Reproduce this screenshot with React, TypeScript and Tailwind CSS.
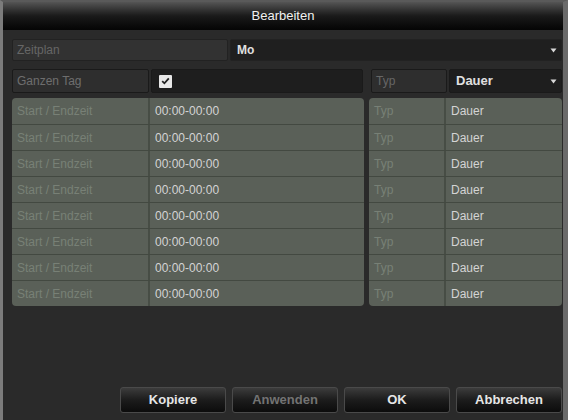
import React from "react"

const font = { fontFamily: '"Liberation Sans", Arial, sans-serif' }

const rows = Array.from({ length: 8 }, () => ({ time: "00:00-00:00", typ: "Dauer" }))

function Arrow() {
  return (
    <svg width="7" height="5" viewBox="0 0 7 5" className="shrink-0">
      <path d="M0.5 0.5 L6.5 0.5 L3.5 4.5 Z" fill="#d8d8d8" />
    </svg>
  )
}

function Button({ label, disabled }: { label: string; disabled?: boolean }) {
  return (
    <div
      className={`flex h-[26px] w-[106px] items-center justify-center rounded-[3px] border border-[#4a4a4a] bg-gradient-to-b from-[#3c3c3c] via-[#1c1c1c] to-[#0c0c0c] text-[13px] font-bold ${
        disabled ? "text-[#737373]" : "text-[#e6e6e6]"
      }`}
    >
      {label}
    </div>
  )
}

export default function App() {
  return (
    <div
      className="flex h-[420px] w-[568px] flex-col border-l-[3px] border-r-[5px] border-t-[2px] border-l-[#7c7c7c] border-r-[#6a6a6a] border-t-[#5a5a5a] bg-[#2a2a2a]"
      style={font}
    >
      {/* title bar */}
      <div className="flex h-[28px] shrink-0 items-center justify-center bg-gradient-to-b from-[#555555] via-[#1a1a1a] to-[#050505] text-[13px] text-[#f0f0f0]">
        Bearbeiten
      </div>

      <div className="flex flex-1 flex-col pl-[9px] pr-[1px]">
        {/* schedule */}
        <div className="mt-[9px] flex h-[22px] gap-[2px]">
          <div className="flex w-[216px] items-center rounded-[2px] border border-[#222] bg-[#323232] pl-[4px] text-[12px] text-[#666]">
            Zeitplan
          </div>
          <div className="flex flex-1 items-center justify-between rounded-[2px] border border-[#222] bg-[#1f1f1f] pl-[6px] pr-[4px] text-[12px] font-bold text-[#e0e0e0]">
            Mo
            <Arrow />
          </div>
        </div>

        {/* whole day + type */}
        <div className="mt-[8px] flex h-[24px]">
          <div className="flex w-[137px] items-center rounded-[2px] border border-[#1a1a1a] bg-[#2e2e2e] pl-[4px] text-[12px] text-[#6e6e6e]">
            Ganzen Tag
          </div>
          <div className="ml-[2px] flex w-[212px] items-center rounded-[2px] border border-[#1a1a1a] bg-[#1e1e1e] pl-[7px]">
            <div className="flex h-[13px] w-[13px] items-center justify-center rounded-[1px] bg-[#e8e8e8]">
              <svg width="9" height="8" viewBox="0 0 9 8">
                <path d="M1.2 4.2 L3.4 6.3 L7.8 1.4" stroke="#222" strokeWidth="1.8" fill="none" />
              </svg>
            </div>
          </div>
          <div className="ml-[8px] flex w-[76px] items-center rounded-[2px] border border-[#1a1a1a] bg-[#2e2e2e] pl-[4px] text-[12px] text-[#666]">
            Typ
          </div>
          <div className="ml-[2px] flex flex-1 items-center justify-between rounded-[2px] border border-[#1a1a1a] bg-[#1e1e1e] pl-[6px] pr-[4px] text-[13px] font-bold text-[#e0e0e0]">
            Dauer
            <Arrow />
          </div>
        </div>

        {/* time slots */}
        <div className="mt-[5px] flex gap-[5px]">
          <div className="flex w-[352px] flex-col overflow-hidden rounded-[4px] bg-[#5a6058]">
            {rows.map((r, i) => (
              <div key={i} className={`flex h-[26px] ${i > 0 ? "border-t border-[#434941]" : ""}`}>
                <div className="flex w-[138px] items-center border-r-2 border-[#474d45] pl-[5px] text-[12px] text-[#788076]">
                  Start / Endzeit
                </div>
                <div className="flex flex-1 items-center pl-[5px] text-[12px] text-[#d4d4d4]">{r.time}</div>
              </div>
            ))}
          </div>
          <div className="flex flex-1 flex-col overflow-hidden rounded-[4px] bg-[#5a6058]">
            {rows.map((r, i) => (
              <div key={i} className={`flex h-[26px] ${i > 0 ? "border-t border-[#434941]" : ""}`}>
                <div className="flex w-[77px] items-center border-r-2 border-[#474d45] pl-[5px] text-[12px] text-[#788076]">
                  Typ
                </div>
                <div className="flex flex-1 items-center pl-[5px] text-[12px] text-[#d4d4d4]">{r.typ}</div>
              </div>
            ))}
          </div>
        </div>

        {/* actions */}
        <div className="mb-[7px] mt-auto flex justify-end gap-[6px]">
          <Button label="Kopiere" />
          <Button label="Anwenden" disabled />
          <Button label="OK" />
          <Button label="Abbrechen" />
        </div>
      </div>
    </div>
  )
}
